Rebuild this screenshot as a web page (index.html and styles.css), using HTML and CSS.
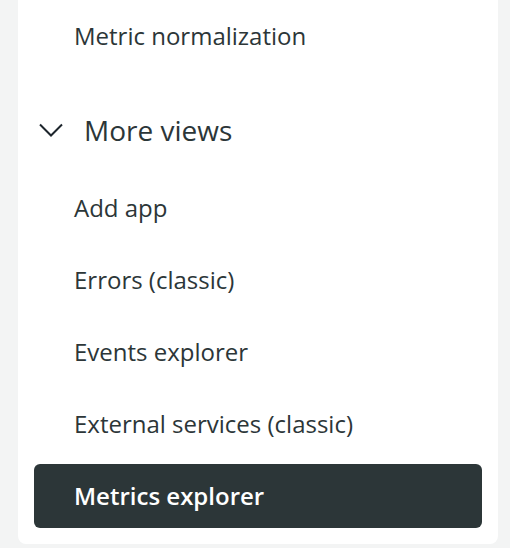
FILE: index.html
```html
<!DOCTYPE html>
<html>
<head>
<meta charset="utf-8">
<link rel="stylesheet" href="styles.css">
</head>
<body>
<div class="card">
  <ul class="list">
    <li class="item">Metric normalization</li>
  </ul>
  <div class="group-head">
    <svg class="chev" width="24" height="14" viewBox="0 0 24 14"><path d="M1 1.5 L12 12.5 L23 1.5" fill="none" stroke="#1d252c" stroke-width="2"/></svg>
    <span class="group-title">More views</span>
  </div>
  <ul class="list">
    <li class="item">Add app</li>
    <li class="item">Errors (classic)</li>
    <li class="item">Events explorer</li>
    <li class="item">External services (classic)</li>
    <li class="item active">Metrics explorer</li>
  </ul>
</div>
</body>
</html>
```
FILE: styles.css
```css
html, body {
  margin: 0;
  padding: 0;
  background: #f3f4f4;
  font-family: "Open Sans", "Noto Sans", sans-serif;
  color: #2c3638;
}
.card {
  margin-left: 18px;
  width: 480px;
  background: #ffffff;
  border-radius: 0 0 8px 8px;
  padding: 4px 16px 16px 16px;
  box-sizing: border-box;
}
.list {
  list-style: none;
  margin: 0;
  padding: 0;
  display: flex;
  flex-direction: column;
  gap: 8px;
}
.item {
  height: 64px;
  display: flex;
  align-items: center;
  padding-left: 40px;
  padding-bottom: 2px;
  box-sizing: border-box;
  font-size: 24px;
  border-radius: 6px;
}
.item.active {
  background: #2c3638;
  color: #ffffff;
  font-weight: 600;
}
.group-head {
  display: flex;
  align-items: center;
  height: 60px;
  margin: 32px 0 16px 0;
  padding-left: 5px;
}
.chev {
  display: block;
  margin-right: 21px;
}
.group-title {
  font-size: 28px;
}
```
